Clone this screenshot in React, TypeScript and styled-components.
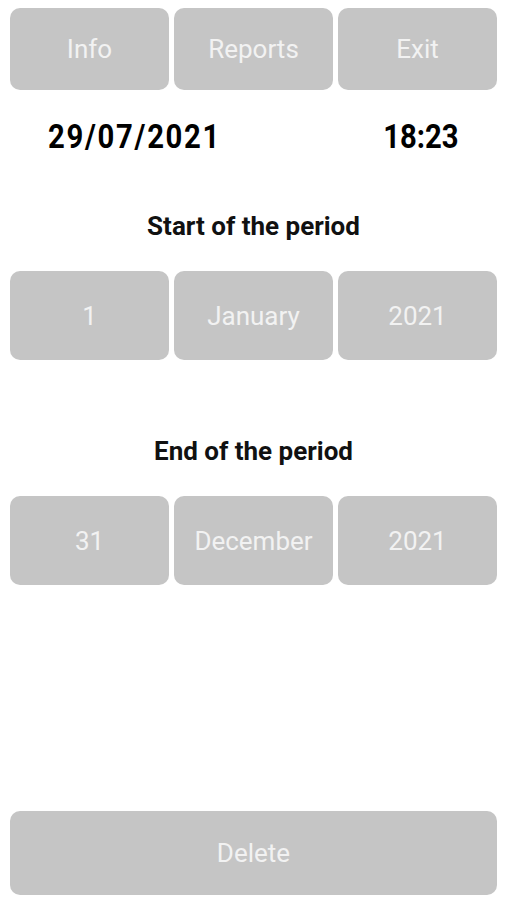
import React from "react";
import styled, { createGlobalStyle } from "styled-components";

const Global = createGlobalStyle`
  html, body { margin: 0; padding: 0; background: #ffffff; }
  body { font-family: Roboto, "Noto Sans", Arial, sans-serif; }
  * { box-sizing: border-box; }
`;

const Screen = styled.div`
  width: 506px;
  height: 900px;
  padding: 8px 9px 5px 10px;
  display: flex;
  flex-direction: column;
`;

const ButtonRow = styled.div<{ $height: number }>`
  display: grid;
  grid-template-columns: repeat(3, 1fr);
  gap: 5px;
  height: ${(p) => p.$height}px;
`;

const GreyButton = styled.button`
  border: none;
  border-radius: 10px;
  background: #c5c5c5;
  color: #f2f2f2;
  font-family: Roboto, Arial, sans-serif;
  font-size: 26px;
  font-weight: 400;
  display: flex;
  align-items: center;
  justify-content: center;
  padding: 0;
  height: 100%;
  width: 100%;
`;

const ClockRow = styled.div`
  display: flex;
  justify-content: space-between;
  align-items: center;
  height: 92px;
  padding: 0 38px 0 38px;
`;

const ClockText = styled.span<{ $align: "left" | "right"; $spacing: number }>`
  display: inline-block;
  font-family: Roboto, Arial, sans-serif;
  font-weight: 700;
  font-size: 34px;
  letter-spacing: ${(p) => p.$spacing}px;
  color: #000;
  line-height: 1;
  transform: scaleX(0.86);
  transform-origin: ${(p) => p.$align} center;
`;

const Heading = styled.div<{ $top: number; $bottom: number }>`
  margin-top: ${(p) => p.$top}px;
  margin-bottom: ${(p) => p.$bottom}px;
  text-align: center;
  font-family: Roboto, Arial, sans-serif;
  font-weight: 700;
  font-size: 26px;
  line-height: 30px;
  color: #111;
`;

const Spacer = styled.div`
  flex: 1;
`;

const DeleteButton = styled(GreyButton)`
  height: 84px;
  flex: none;
`;

export default function App() {
  return (
    <>
      <Global />
      <Screen>
        <ButtonRow $height={82}>
          <GreyButton>Info</GreyButton>
          <GreyButton>Reports</GreyButton>
          <GreyButton>Exit</GreyButton>
        </ButtonRow>
        <ClockRow>
          <ClockText $align="left" $spacing={2}>29/07/2021</ClockText>
          <ClockText $align="right" $spacing={0}>18:23</ClockText>
        </ClockRow>
        <Heading $top={29} $bottom={30}>Start of the period</Heading>
        <ButtonRow $height={89}>
          <GreyButton>1</GreyButton>
          <GreyButton>January</GreyButton>
          <GreyButton>2021</GreyButton>
        </ButtonRow>
        <Heading $top={76} $bottom={30}>End of the period</Heading>
        <ButtonRow $height={89}>
          <GreyButton>31</GreyButton>
          <GreyButton>December</GreyButton>
          <GreyButton>2021</GreyButton>
        </ButtonRow>
        <Spacer />
        <DeleteButton>Delete</DeleteButton>
      </Screen>
    </>
  );
}
